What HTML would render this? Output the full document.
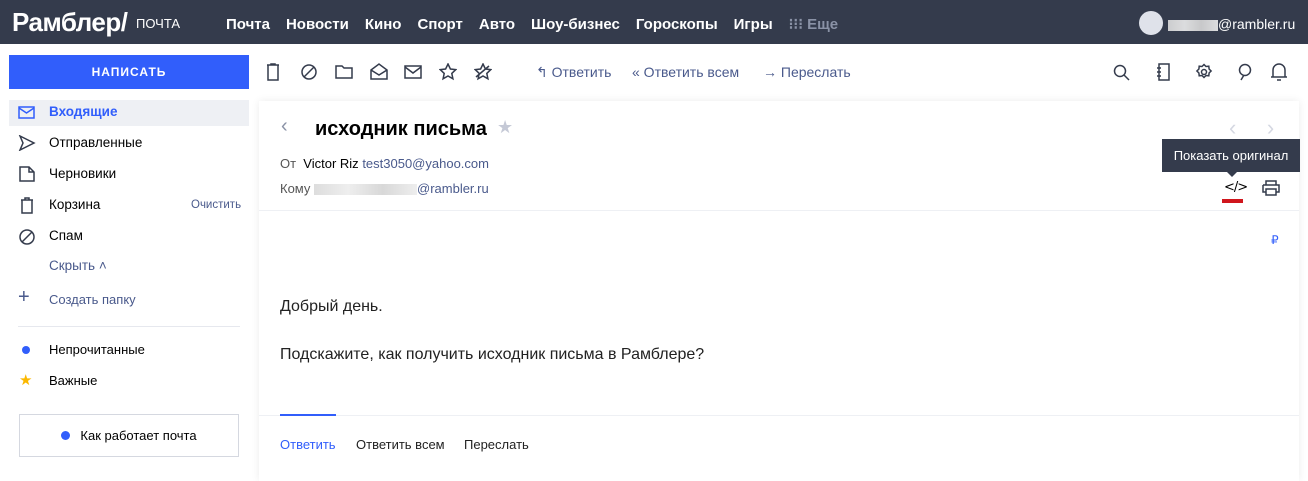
<!DOCTYPE html>
<html><head><meta charset="utf-8"><style>
*{box-sizing:border-box;margin:0;padding:0}
body{width:1308px;height:472px;overflow:hidden;background:#fff;font-family:"Liberation Sans",sans-serif;color:#000;position:relative}
.top{position:absolute;left:0;top:0;width:1308px;height:44px;background:#343b4c;color:#fff}
.abs{position:absolute;white-space:nowrap}
.nav span{margin-right:16px;font-weight:bold;font-size:15px}
svg{position:absolute;fill:none;stroke:#343b4c;stroke-width:1.5}
.side{font-size:13.5px;color:#000}
.tb{color:#4a5a8c;font-size:14px}
.card{position:absolute;left:259px;top:101px;width:1040px;height:380px;background:#fff;box-shadow:0 0 8px rgba(0,0,0,.08)}
.blur{display:inline-block;background:linear-gradient(90deg,#ddd,#eee,#d8d8d8,#eee);height:11px;vertical-align:middle}
</style></head><body>
<div class="top">
<div class="abs" style="left:12px;top:7px;font-size:26px;font-weight:bold;letter-spacing:-0.5px">Рамблер/</div>
<div class="abs" style="left:136px;top:16px;font-size:13px">ПОЧТА</div>
<div class="abs nav" style="left:226px;top:15px"><span>Почта</span><span>Новости</span><span>Кино</span><span>Спорт</span><span>Авто</span><span>Шоу-бизнес</span><span>Гороскопы</span><span>Игры</span><span style="color:#8a92a6">⁝⁝⁝ Еще</span></div>
<div class="abs" style="left:1139px;top:11px;width:24px;height:24px;border-radius:50%;background:#dfe2ea"></div>
<div class="abs" style="left:1168px;top:16px;font-size:14px"><span class="blur" style="width:50px;opacity:.9"></span>@rambler.ru</div>
</div>
<div class="abs" style="left:9px;top:55px;width:240px;height:34px;background:#315efb;color:#fff;font-size:12px;font-weight:bold;text-align:center;line-height:34px;letter-spacing:1px">НАПИСАТЬ</div>
<div class="abs" style="left:9px;top:100px;width:240px;height:26px;background:#eef0f4"></div>
<svg style="left:18px;top:105px" width="18" height="16"><rect x="1" y="2" width="15" height="11" stroke="#315efb"/><path d="M1 3l7.5 5 7.5-5" stroke="#315efb"/></svg>
<div class="abs side" style="left:49px;top:104px;color:#315efb;font-weight:bold">Входящие</div>
<svg style="left:18px;top:135px" width="18" height="16"><path d="M2 1l14 7-14 7 3-7z"/></svg>
<div class="abs side" style="left:49px;top:135px">Отправленные</div>
<svg style="left:18px;top:166px" width="18" height="16"><path d="M2 1h9l5 5v9H2z M11 1v5h5"/></svg>
<div class="abs side" style="left:49px;top:166px">Черновики</div>
<svg style="left:18px;top:197px" width="18" height="18"><path d="M3 3h12M7 3V1h4v2M4 3v13h10V3"/></svg>
<div class="abs side" style="left:49px;top:197px">Корзина</div>
<div class="abs" style="left:191px;top:199px;font-size:11.5px;color:#4a5a8c">Очистить</div>
<svg style="left:18px;top:228px" width="18" height="18"><circle cx="9" cy="9" r="7"/><path d="M4 14L14 4"/></svg>
<div class="abs side" style="left:49px;top:228px">Спам</div>
<div class="abs side" style="left:49px;top:258px;color:#4a5a8c">Скрыть ˄</div>
<div class="abs" style="left:18px;top:286px;font-size:20px;color:#4a5a8c">+</div>
<div class="abs side" style="left:49px;top:292px;color:#4a5a8c;font-size:13px">Создать папку</div>
<div class="abs" style="left:18px;top:326px;width:222px;height:1px;background:#e6e8ee"></div>
<div class="abs" style="left:22px;top:346px;width:8px;height:8px;border-radius:50%;background:#315efb"></div>
<div class="abs side" style="left:49px;top:342px;font-size:13px">Непрочитанные</div>
<div class="abs" style="left:19px;top:371px;font-size:15px;color:#fbb800">★</div>
<div class="abs side" style="left:49px;top:373px;font-size:13px">Важные</div>
<div class="abs" style="left:19px;top:414px;width:220px;height:43px;border:1px solid #d5d8e0;font-size:13px;text-align:center;line-height:41px"><span style="display:inline-block;width:9px;height:9px;border-radius:50%;background:#315efb;margin-right:10px"></span>Как работает почта</div>
<svg style="left:265px;top:63px" width="16" height="18" stroke="#4a5a8c"><path d="M2 2h12M6 2V1h4v1M3 2v15h10V2"/></svg>
<svg style="left:300px;top:63px" width="18" height="18" stroke="#4a5a8c"><circle cx="9" cy="9" r="7"/><path d="M4 14L14 4"/></svg>
<svg style="left:335px;top:64px" width="18" height="16" stroke="#4a5a8c"><path d="M1 2h6l2 2h8v10H1z"/></svg>
<svg style="left:370px;top:63px" width="18" height="17" stroke="#4a5a8c"><path d="M1 7l8-6 8 6v9H1z M1 7l8 5 8-5"/></svg>
<svg style="left:404px;top:65px" width="18" height="15" stroke="#4a5a8c"><rect x="1" y="1" width="16" height="12"/><path d="M1 2l8 6 8-6"/></svg>
<svg style="left:439px;top:63px" width="18" height="18" stroke="#4a5a8c"><path d="M9 1l2.4 5 5.4.6-4 3.8 1.1 5.4L9 13l-4.9 2.8 1.1-5.4-4-3.8 5.4-.6z"/></svg>
<svg style="left:474px;top:63px" width="18" height="18" stroke="#4a5a8c"><path d="M9 1l2.4 5 5.4.6-4 3.8 1.1 5.4L9 13l-4.9 2.8 1.1-5.4-4-3.8 5.4-.6z M2 14L15 3"/></svg>
<div class="abs tb" style="left:536px;top:64px">↰ Ответить</div>
<div class="abs tb" style="left:632px;top:64px">« Ответить всем</div>
<div class="abs tb" style="left:763px;top:64px">→ Переслать</div>
<svg style="left:1113px;top:64px" width="18" height="18" stroke="#000"><circle cx="7" cy="7" r="5.5"/><path d="M11 11l5 5"/></svg>
<svg style="left:1155px;top:63px" width="16" height="19" stroke="#000"><rect x="4" y="1" width="10" height="16"/><path d="M2 5h4M2 9h4M2 13h4"/></svg>
<svg style="left:1195px;top:63px" width="18" height="18" stroke="#000"><circle cx="9" cy="9" r="2.5"/><path d="M9 1.5l2 2 2.8-.3.3 2.8 2 2-2 2-.3 2.8-2.8-.3-2 2-2-2-2.8.3-.3-2.8-2-2 2-2 .3-2.8 2.8.3z"/></svg>
<svg style="left:1237px;top:63px" width="16" height="19" stroke="#000"><circle cx="8" cy="7" r="5.5"/><path d="M7 12l-3 5"/></svg>
<svg style="left:1270px;top:63px" width="18" height="19" stroke="#000"><path d="M3 14V7a6 6 0 0 1 12 0v7M1 14h16M7 17h4"/></svg>
<div class="card">
<div class="abs" style="left:22px;top:14px;font-size:20px;color:#8a92a6">‹</div>
<div class="abs" style="left:56px;top:17px;font-size:20px;font-weight:bold;color:#000">исходник письма</div>
<div class="abs" style="left:238px;top:16px;font-size:18px;color:#c5c9d6">★</div>
<div class="abs" style="left:970px;top:14px;font-size:22px;color:#d5d8e2">‹&nbsp;&nbsp;&nbsp;&nbsp;&nbsp;›</div>
<div class="abs" style="left:21px;top:55px;font-size:13px;color:#555">От &nbsp;<span style="color:#000">Victor Riz</span> <span style="color:#4a5a8c">test3050@yahoo.com</span></div>
<div class="abs" style="left:21px;top:80px;font-size:13px;color:#555">Кому <span class="blur" style="width:103px"></span><span style="color:#4a5a8c">@rambler.ru</span></div>
<div class="abs" style="left:903px;top:38px;width:138px;height:33px;background:#343b4c;color:#fff;font-size:13px;line-height:33px;text-align:center">Показать оригинал</div>
<div class="abs" style="left:968px;top:71px;width:0;height:0;border:5px solid transparent;border-top-color:#343b4c"></div>
<div class="abs" style="left:965px;top:79px;font-size:13px;font-family:'DejaVu Sans';color:#000;letter-spacing:-1px">&lt;/&gt;</div>
<div class="abs" style="left:963px;top:98px;width:21px;height:4px;background:#d0161d"></div>
<svg style="left:1003px;top:79px" width="18" height="16" stroke="#000"><path d="M4 5V1h10v4M1 5h16v7h-3M4 12H1V5M4 9h10v6H4z"/></svg>
<div class="abs" style="left:0;top:109px;width:1040px;height:1px;background:#eef0f4"></div>
<div class="abs" style="left:1012px;top:132px;font-size:12px;color:#315efb">₽</div>
<div class="abs" style="left:21px;top:197px;font-size:16px;color:#222">Добрый день.</div>
<div class="abs" style="left:21px;top:245px;font-size:16px;color:#222">Подскажите, как получить исходник письма в Рамблере?</div>
<div class="abs" style="left:0;top:314px;width:1040px;height:1px;background:#eef0f4"></div>
<div class="abs" style="left:21px;top:313px;width:56px;height:2px;background:#315efb"></div>
<div class="abs" style="left:21px;top:336px;font-size:13px;color:#315efb">Ответить</div>
<div class="abs" style="left:97px;top:336px;font-size:13px;color:#222">Ответить всем</div>
<div class="abs" style="left:205px;top:336px;font-size:13px;color:#222">Переслать</div>
</div>
</body></html>
